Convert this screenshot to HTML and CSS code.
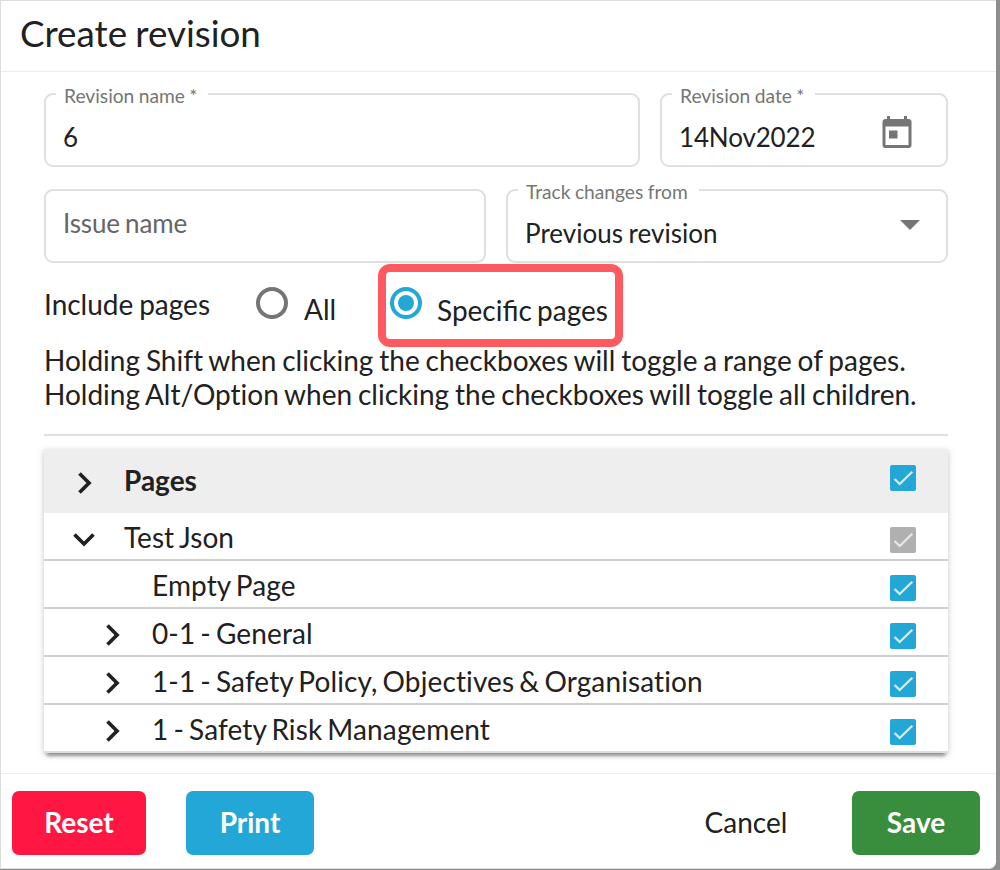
FILE: index.html
```html
<!DOCTYPE html>
<html lang="en">
<head>
<meta charset="utf-8">
<title>Create revision</title>
<link rel="stylesheet" href="styles.css">
</head>
<body>
<svg class="defs" width="0" height="0">
  <symbol id="chevron" viewBox="0 0 24 24"><path d="M7.500 2.500 17 12l-9.500 9.500" fill="none" stroke="currentColor" stroke-width="3.700"/></symbol>
  <symbol id="check" viewBox="0 0 26 26"><path d="M4.500 14 9.700 19 22.300 6.700" fill="none" stroke="currentColor" stroke-width="2.300"/></symbol>
</svg>
<main class="dialog">
  <header class="dialog-header"><h1 class="title">Create revision</h1></header>
  <section class="content">
    <div class="row">
      <div class="field name"><label class="label">Revision name *</label><span class="value">6</span></div>
      <div class="field date"><label class="label">Revision date *</label><span class="value">14Nov2022</span>
        <svg class="calendar" viewBox="0 0 32 36"><path fill="#757575" fill-rule="evenodd" d="M6 1h3v3h14V1h3v3h1.500a3 3 0 0 1 3 3v23a3 3 0 0 1-3 3h-23a3 3 0 0 1-3-3V7a3 3 0 0 1 3-3H6zM4.500 11.500v18.500h23V11.500z"/><path fill="#757575" d="M8 15.500h8.500v8H8z"/></svg>
      </div>
    </div>
    <div class="row">
      <div class="field half"><span class="placeholder">Issue name</span></div>
      <div class="field half"><label class="label">Track changes from</label><span class="value previous">Previous revision</span><span class="arrow"></span></div>
    </div>
    <div class="options">
      <span class="include">Include pages</span>
      <span class="radio"></span><span class="all">All</span>
      <div class="highlight"><span class="radio on"></span><span class="specific">Specific pages</span></div>
    </div>
    <p class="hint">Holding Shift when clicking the checkboxes will toggle a range of pages.<br>Holding Alt/Option when clicking the checkboxes will toggle all children.</p>
    <div class="tree">
      <div class="item head"><svg class="chev"><use href="#chevron"/></svg><span class="text">Pages</span><svg class="box"><use href="#check"/></svg></div>
      <div class="item"><svg class="chev down"><use href="#chevron"/></svg><span class="text">Test Json</span><svg class="box off"><use href="#check"/></svg></div>
      <div class="item child"><span class="chev"></span><span class="text">Empty Page</span><svg class="box"><use href="#check"/></svg></div>
      <div class="item child"><svg class="chev"><use href="#chevron"/></svg><span class="text">0-1 - General</span><svg class="box"><use href="#check"/></svg></div>
      <div class="item child"><svg class="chev"><use href="#chevron"/></svg><span class="text">1-1 - Safety Policy, Objectives &amp; Organisation</span><svg class="box"><use href="#check"/></svg></div>
      <div class="item child"><svg class="chev"><use href="#chevron"/></svg><span class="text">1 - Safety Risk Management</span><svg class="box"><use href="#check"/></svg></div>
    </div>
  </section>
  <footer class="actions">
    <button class="btn reset">Reset</button><button class="btn print">Print</button><button class="btn cancel">Cancel</button><button class="btn save">Save</button>
  </footer>
</main>
</body>
</html>
```
FILE: styles.css
```css
* { box-sizing: border-box; }
body { margin: 0; height: 870px; overflow: hidden; background: #8e8e8e; font: 28px/34px Lato, sans-serif; word-spacing: -1.3px; font-variant-ligatures: none; color: #212121; }
.defs { position: absolute; }
.dialog { width: 996px; height: 869px; display: flex; flex-direction: column; background: #fff; border: 1px solid #ddd; border-right: 0; border-bottom-right-radius: 7px; }
.dialog-header { height: 71px; padding: 9px 19px; border-bottom: 1px solid #ececec; }
.title { margin: 0; font-size: 36.8px; line-height: 46px; font-weight: 400; }
.content { height: 701px; padding: 21px 48px 0 43px; }
.row { display: flex; gap: 20px; margin-bottom: 22px; }
.field { position: relative; display: flex; height: 74px; padding: 13px 18px 0 17px; border: 2px solid #e0e0e0; border-radius: 9px; font-size: 26px; letter-spacing: -.15px; }
.name { width: 596px; }
.date { width: 288px; }
.half { width: 442px; }
.value { margin-top: 12px; }
.previous { letter-spacing: .03px; }
.placeholder { margin-top: 2px; color: #666; }
.label { position: absolute; left: 10px; top: -13px; padding: 0 11px 0 8px; background: #fff; color: #757575; font-size: 19.2px; line-height: 28px; letter-spacing: 0; word-spacing: -.5px; white-space: nowrap; }
.calendar { width: 32px; height: 36px; margin: 7px 15px 0 auto; }
.arrow { margin: 16px 8px 0 auto; width: 0; height: 0; border: 10px solid transparent; border-top-color: #757575; border-bottom: 0; }
.options { display: flex; height: 83px; margin-top: -21px; align-items: flex-start; white-space: nowrap; }
.include { width: 212px; margin-top: 23px; }
.radio { flex: none; width: 32px; height: 32px; margin-top: 23px; border: 4px solid #757575; border-radius: 50%; }
.all { width: 74px; margin: 28px 0 0 16px; }
.highlight { display: flex; width: 245px; height: 83px; padding-left: 4px; border: 8px solid #ff5a5f; border-radius: 12px; font-variant-ligatures: normal; }
.highlight .radio { margin-top: 15px; }
.radio.on { border-color: #23a7d7; background: #23a7d7; background-clip: content-box; padding: 4px; }
.specific { margin: 21px 0 0 15px; word-spacing: -2px; }
.hint { height: 93px; margin: -4px 0 13px; border-bottom: 2px solid #e0e0e0; white-space: nowrap; }
.tree { height: 304px; box-shadow: 0 6px 3px -3px rgba(0,0,0,.3), 0 2px 5px rgba(0,0,0,.12), 0 2px 8px rgba(0,0,0,.12); background: #fff; }
.item { display: flex; align-items: center; height: 48px; padding: 0 32px 0 28px; border-bottom: 2px solid #cfcfcf; }
.item:last-child { border-bottom-color: #ddd; }
.head { height: 64px; background: #eee; border: 0; font-weight: 700; }
.child { padding-left: 56px; word-spacing: -2.2px; letter-spacing: .12px; }
.chev { width: 24px; height: 24px; margin-top: 5px; }
.head .chev { margin-top: 3px; }
.down { transform: rotate(90deg); }
.text { margin: 1px 0 0 28px; white-space: nowrap; }
.head .text { margin-top: -3px; }
.box { width: 26px; height: 26px; margin: 7px 0 0 auto; border-radius: 2px; background: #23a7d7; color: #d3edf7; }
.head .box { margin-top: -6px; }
.off { background: #b0b0b0; color: #e7e7e7; }
.actions { display: flex; flex: 1; padding: 17px 16px 0 11px; border-top: 1px solid #ececec; }
.btn { height: 64px; padding: 0 0 2px; border: 0; border-radius: 7px; color: #fff; font: 700 28px/34px Lato, sans-serif; }
.reset { width: 134px; margin-right: 40px; background: #ff1744; }
.print { width: 128px; background: #23a7d7; }
.cancel { width: 128px; margin-left: auto; margin-right: 42px; background: transparent; color: #212121; font-weight: 400; }
.save { width: 128px; background: #388e3c; }
```
